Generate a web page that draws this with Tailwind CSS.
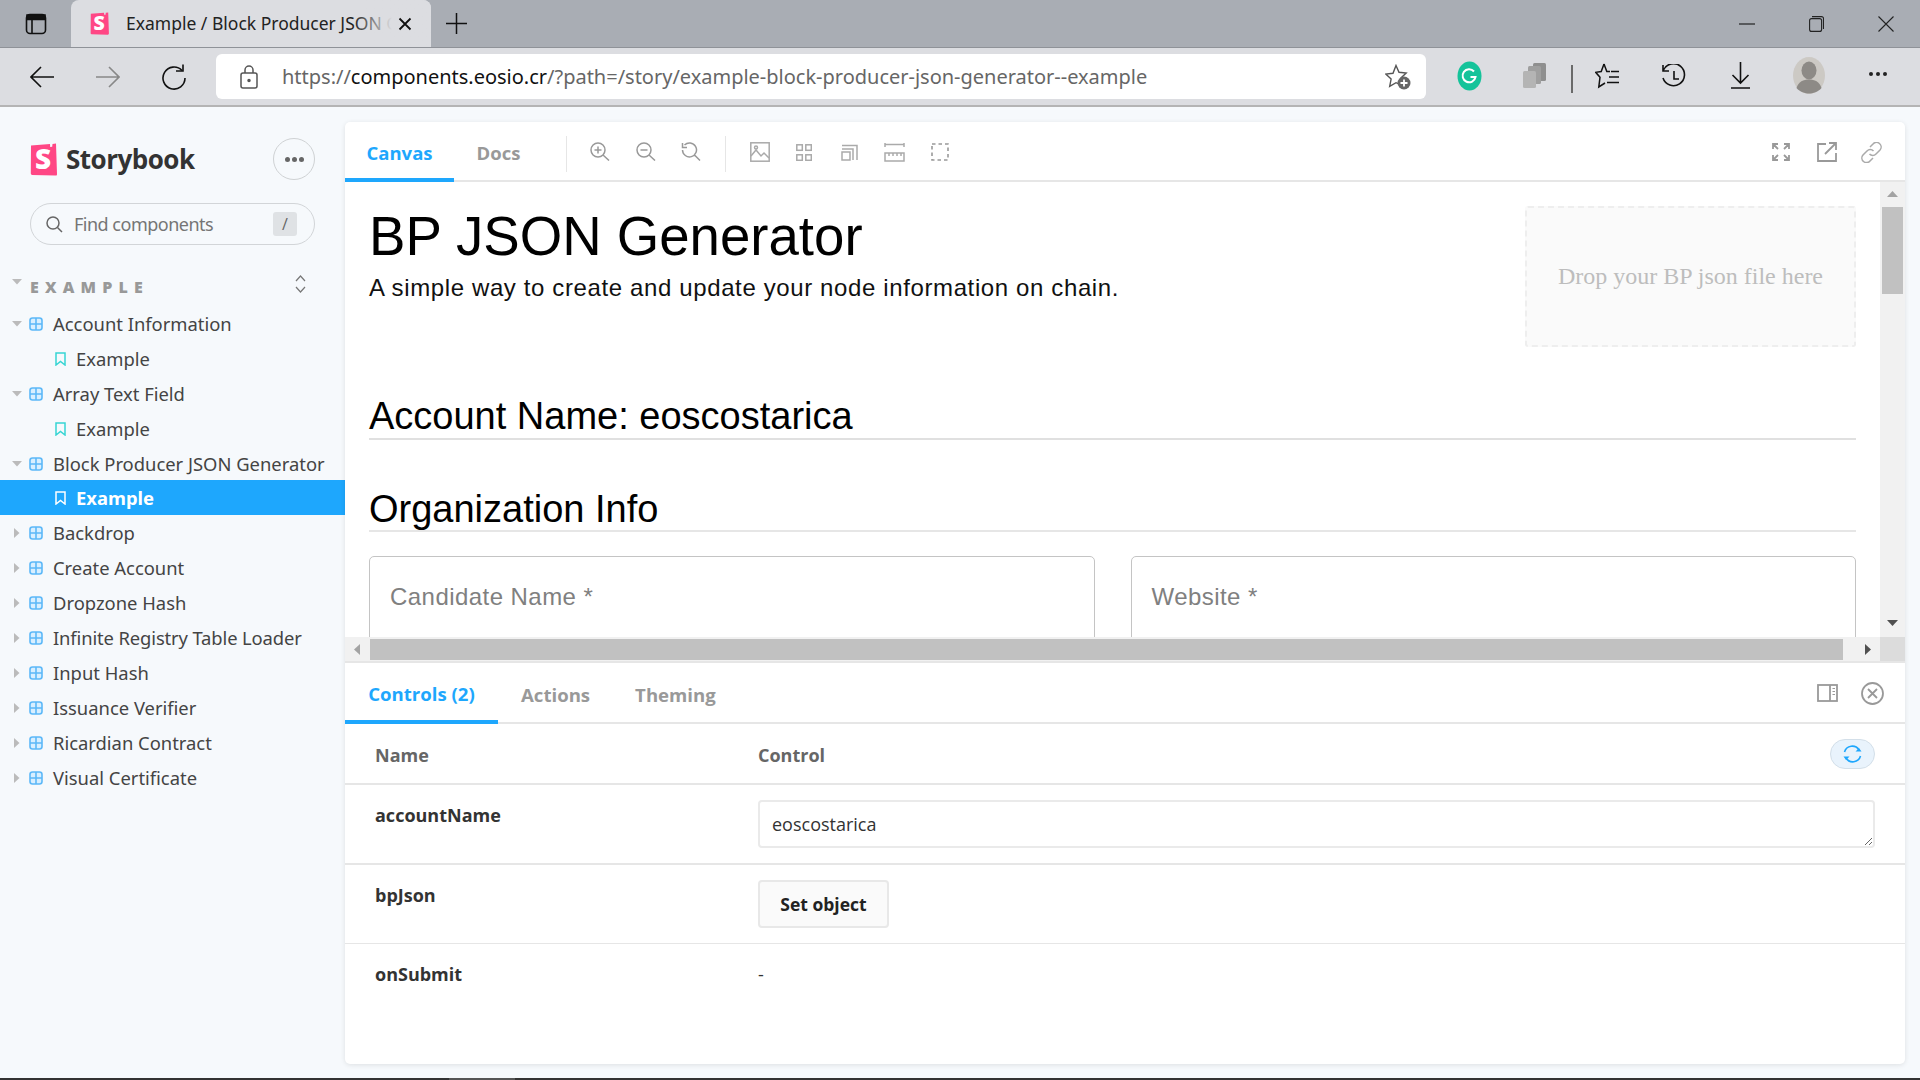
<!DOCTYPE html>
<html lang="en">
<head>
<meta charset="utf-8">
<title>Example / Block Producer JSON Generator</title>
<script src="https://cdn.jsdelivr.net/npm/@tailwindcss/browser@4"></script>
</head>
<body class="m-0">
<svg class="hidden" xmlns="http://www.w3.org/2000/svg">
  <symbol id="grid" viewBox="0 0 14 14"><rect x="1" y="1" width="12" height="12" rx="2.5" fill="#d9efff" stroke="#5cb8f8" stroke-width="1.6"/><path d="M7 1v12M1 7h12" stroke="#5cb8f8" stroke-width="1.6"/></symbol>
  <symbol id="mark" viewBox="0 0 11 14"><path d="M1 1h9v12L5.500 9.500 1 13z" fill="none" stroke="currentColor" stroke-width="1.500"/></symbol>
  <symbol id="down" viewBox="0 0 10 6"><path d="M0 0h10L5 5.500z" fill="#bbb"/></symbol>
  <symbol id="right" viewBox="0 0 6 10"><path d="M0 0v10l5.500-5z" fill="#bbb"/></symbol>
  <symbol id="sblogo" viewBox="0 0 27 33"><path d="M1 2.500 20 1l.2 3 2-.2L22.500 1 26 .6 27 31a1.500 1.500 0 0 1-1.500 1.600L2.200 32A1.500 1.500 0 0 1 .8 30.500z" fill="#ff4785"/><text x="13" y="26" text-anchor="middle" font-family="Open Sans" font-weight="800" font-size="28" fill="#fff">S</text></symbol>
</svg>

<div class="w-[1920px] h-[1080px] overflow-hidden flex flex-col bg-[#f6f9fc] font-['Open_Sans',sans-serif]">

  <!-- browser tabs -->
  <div class="h-[47px] bg-[#a9adb4] flex items-end shrink-0 relative">
    <div class="w-[71px] h-[47px] flex items-center justify-center">
      <svg width="22" height="22" viewBox="0 0 22 22" fill="none" stroke="#111" stroke-width="1.6"><rect x="1.500" y="1.500" width="19" height="19" rx="3.500"/><path d="M1.500 6.500h19M7 6.500v14"/><path d="M2 2h18v4H2z" fill="#111"/></svg>
    </div>
    <div class="w-[360px] h-[47px] bg-[#dcdde1] rounded-t-[8px] flex items-center pl-[19px] relative">
      <svg width="19" height="23" class="shrink-0"><use href="#sblogo"/></svg>
      <span class="ml-[17px] text-[17.500px] text-[#222] whitespace-nowrap font-['Noto_Sans',sans-serif]">Example / Block Producer JSON G</span>
      <div class="absolute left-[282px] top-0 w-[78px] h-[47px] rounded-tr-[8px] bg-gradient-to-r from-[#dcdde1]/0 via-[#dcdde1] to-[#dcdde1]"></div>
      <svg class="absolute left-[327px] top-[17px]" width="14" height="14" viewBox="0 0 14 14" stroke="#111" stroke-width="1.800"><path d="M1.500 1.500l11 11M12.500 1.500l-11 11"/></svg>
    </div>
    <svg class="ml-[15px] mb-[13px]" width="21" height="21" viewBox="0 0 21 21" stroke="#111" stroke-width="1.500"><path d="M10.500 0v21M0 10.500h21"/></svg>
    <div class="ml-auto h-[47px] flex items-center pr-[26px] gap-[54px]">
      <svg width="16" height="2" viewBox="0 0 16 2"><path d="M0 1h16" stroke="#222" stroke-width="1.200"/></svg>
      <svg width="15" height="16" viewBox="0 0 15 16" fill="none" stroke="#222" stroke-width="1.100"><rect x=".6" y="2.600" width="12" height="12.800" rx="2"/><path d="M3 .6h9.500a2 2 0 0 1 2 2V13"/></svg>
      <svg width="16" height="16" viewBox="0 0 16 16" stroke="#222" stroke-width="1.100"><path d="M.5.500l15 15M15.500.500l-15 15"/></svg>
    </div>
  </div>

  <!-- browser toolbar -->
  <div class="h-[60px] shrink-0 bg-[#dcdde1] border-t border-t-[#8f9298] border-b-[2px] border-b-[#b4b4b4] flex items-center relative">
    <div class="w-[216px] flex items-center pl-[30px] gap-[42px] shrink-0">
      <svg width="24" height="22" viewBox="0 0 24 22" fill="none" stroke="#111" stroke-width="1.600"><path d="M24 11H1M11 1 1 11l10 10"/></svg>
      <svg width="24" height="22" viewBox="0 0 24 22" fill="none" stroke="#888" stroke-width="1.600"><path d="M0 11h23M13 1l10 10-10 10"/></svg>
      <svg width="24" height="26" viewBox="0 0 24 26" fill="none" stroke="#111" stroke-width="1.600"><path d="M20 6.500A11 11 0 1 0 23 14"/><path d="M21 .5v6.500h-7"/></svg>
    </div>
    <div class="w-[1210px] h-[45px] bg-white rounded-[6px] flex items-center pl-[24px] pr-[15px] shrink-0">
      <svg width="18" height="24" viewBox="0 0 18 24" fill="none" stroke="#555" stroke-width="1.500"><rect x="1" y="8" width="16" height="15" rx="2"/><path d="M5 8V5a4 4 0 0 1 8 0v3"/><circle cx="9" cy="15.500" r="1" fill="#555"/></svg>
      <span class="ml-[24px] text-[20px] tracking-[-0.01px] whitespace-nowrap text-[#666] font-['Noto_Sans',sans-serif]">https://<span class="text-[#111]">components.eosio.cr</span>/?path=/story/example-block-producer-json-generator--example</span>
      <svg class="ml-auto" width="26" height="26" viewBox="0 0 26 26"><path d="M11 1.500l3 6.800 7.200.8-5.300 5 1.400 7.200L11 18.700l-6.300 3.600 1.400-7.200-5.300-5 7.200-.8z" fill="none" stroke="#555" stroke-width="1.400"/><circle cx="19" cy="19" r="6.500" fill="#666"/><path d="M19 15.500v7M15.500 19h7" stroke="#fff" stroke-width="1.800"/></svg>
    </div>
    <div class="relative flex-1 h-full">
      <svg class="absolute left-[31px] top-[13px]" width="25" height="30" viewBox="0 0 25 30"><ellipse cx="12.500" cy="15" rx="12" ry="14.500" fill="#15c39a"/><path d="M17 10.500a6.500 6.500 0 1 0 1.500 5.500h-5" fill="none" stroke="#fff" stroke-width="2"/></svg>
      <svg class="absolute left-[97px] top-[14px]" width="24" height="26" viewBox="0 0 24 26"><rect x="10" y="1" width="13" height="18" rx="1.500" fill="#8f8f8f"/><rect x="5" y="4" width="13" height="18" rx="1.500" fill="#9f9f9f"/><rect x="0" y="9" width="13" height="17" rx="1.500" fill="#b4b4b4"/></svg>
      <div class="absolute left-[145px] top-[17px] w-[2px] h-[28px] bg-[#6a6a6a]"></div>
      <svg class="absolute left-[169px] top-[14px]" width="24" height="28" viewBox="0 0 24 28" fill="none" stroke="#111" stroke-width="1.500"><path d="M9 2l2.800 7.500H15M9 2 6.200 9.500l-5.500.8 4.300 5L3.800 25 10 21"/><path d="M16 9.500h8M14 15h10M12 20.500h12"/></svg>
      <svg class="absolute left-[236px] top-[16px]" width="24" height="28" viewBox="0 0 24 28" fill="none" stroke="#111" stroke-width="1.600"><path d="M1.500 6A11 11 0 1 1 1 14M1 1v6h6"/><path d="M12 7v8h5"/></svg>
      <svg class="absolute left-[305px] top-[14px]" width="19" height="27" viewBox="0 0 19 27" fill="none" stroke="#111" stroke-width="1.600"><path d="M9.500 0v21M1.500 13l8 8 8-8M0 26h19"/></svg>
      <svg class="absolute left-[367px] top-[9px]" width="32" height="37" viewBox="0 0 32 37"><ellipse cx="16" cy="18.500" rx="16" ry="18.500" fill="#ccc9c4"/><ellipse cx="16" cy="13.500" rx="7.500" ry="9" fill="#8d8a86"/><path d="M3.500 31c2-6.500 7-8.500 12.500-8.500S26.500 24.500 28.500 31C25 35 20 36.500 16 36.500S7 35 3.500 31z" fill="#8d8a86"/></svg>
      <div class="absolute left-[443px] top-[24px] flex gap-[3px]">
        <span class="w-[4px] h-[4px] rounded-full bg-[#222]"></span><span class="w-[4px] h-[4px] rounded-full bg-[#222]"></span><span class="w-[4px] h-[4px] rounded-full bg-[#222]"></span>
      </div>
    </div>
  </div>

  <div class="flex flex-1 min-h-0">
    <!-- sidebar -->
    <aside class="w-[345px] shrink-0 text-[18.400px] text-[#444]">
      <div class="pl-[30px] pr-[30px] pt-[31px]">
        <div class="h-[42px] flex items-center">
          <svg width="27" height="33"><use href="#sblogo"/></svg>
          <span class="ml-[9px] text-[26px] font-bold tracking-[-0.5px] text-[#333] font-['Open_Sans',sans-serif]">Storybook</span>
          <div class="ml-auto w-[42px] h-[42px] rounded-full border border-[#cfd2d4] flex items-center justify-center gap-[2px]">
            <span class="w-[5px] h-[5px] rounded-full bg-[#666]"></span><span class="w-[5px] h-[5px] rounded-full bg-[#666]"></span><span class="w-[5px] h-[5px] rounded-full bg-[#666]"></span>
          </div>
        </div>
        <div class="mt-[23px] h-[42px] rounded-full border border-[#d2d5d8] flex items-center pl-[15px] pr-[17px]">
          <svg width="17" height="17" viewBox="0 0 17 17" fill="none" stroke="#666" stroke-width="1.500"><circle cx="7" cy="7" r="6"/><path d="M11.500 11.500 16 16"/></svg>
          <span class="ml-[11px] text-[#757575] text-[18px] font-['Noto_Sans',sans-serif] tracking-[-0.5px]">Find components</span>
          <span class="ml-auto w-[24px] h-[24px] rounded-[3px] bg-[#dfe2e5] text-[#666] text-[16px] flex items-center justify-center">/</span>
        </div>
      </div>
      <div class="mt-[24px] h-[35px] relative pl-[30px] flex items-center text-[#999] font-black text-[16px] tracking-[6.200px]">
        <svg class="absolute left-[12px] top-[10px]" width="10" height="6"><use href="#down"/></svg>
        EXAMPLE
        <svg class="absolute left-[295px] top-[6px]" width="11" height="18" viewBox="0 0 11 18" fill="none" stroke="#777" stroke-width="1.200"><path d="M1 6l4.500-5L10 6M1 12l4.500 5 4.500-5"/></svg>
      </div>
      <ul class="mt-[2px] font-['Noto_Sans',sans-serif]">
        <li class="h-[35px] flex items-center pl-[12px]"><svg width="10" height="6"><use href="#down"/></svg><svg class="ml-[7px]" width="14" height="14"><use href="#grid"/></svg><span class="ml-[10px]">Account Information</span></li>
        <li class="h-[35px] flex items-center pl-[55px]"><svg class="text-[#37d5d3]" width="11" height="14"><use href="#mark"/></svg><span class="ml-[10px]">Example</span></li>
        <li class="h-[35px] flex items-center pl-[12px]"><svg width="10" height="6"><use href="#down"/></svg><svg class="ml-[7px]" width="14" height="14"><use href="#grid"/></svg><span class="ml-[10px]">Array Text Field</span></li>
        <li class="h-[35px] flex items-center pl-[55px]"><svg class="text-[#37d5d3]" width="11" height="14"><use href="#mark"/></svg><span class="ml-[10px]">Example</span></li>
        <li class="h-[35px] flex items-center pl-[12px]"><svg width="10" height="6"><use href="#down"/></svg><svg class="ml-[7px]" width="14" height="14"><use href="#grid"/></svg><span class="ml-[10px] whitespace-nowrap">Block Producer JSON Generator</span></li>
        <li class="h-[35px] -mt-px flex items-center pl-[55px] bg-[#1ea7fd] text-white font-bold"><svg class="text-white" width="11" height="14"><use href="#mark"/></svg><span class="ml-[10px]">Example</span></li>
        <li class="h-[35px] flex items-center pl-[14px]"><svg width="6" height="10"><use href="#right"/></svg><svg class="ml-[9px]" width="14" height="14"><use href="#grid"/></svg><span class="ml-[10px]">Backdrop</span></li>
        <li class="h-[35px] flex items-center pl-[14px]"><svg width="6" height="10"><use href="#right"/></svg><svg class="ml-[9px]" width="14" height="14"><use href="#grid"/></svg><span class="ml-[10px]">Create Account</span></li>
        <li class="h-[35px] flex items-center pl-[14px]"><svg width="6" height="10"><use href="#right"/></svg><svg class="ml-[9px]" width="14" height="14"><use href="#grid"/></svg><span class="ml-[10px]">Dropzone Hash</span></li>
        <li class="h-[35px] flex items-center pl-[14px]"><svg width="6" height="10"><use href="#right"/></svg><svg class="ml-[9px]" width="14" height="14"><use href="#grid"/></svg><span class="ml-[10px] tracking-[-0.12px]">Infinite Registry Table Loader</span></li>
        <li class="h-[35px] flex items-center pl-[14px]"><svg width="6" height="10"><use href="#right"/></svg><svg class="ml-[9px]" width="14" height="14"><use href="#grid"/></svg><span class="ml-[10px]">Input Hash</span></li>
        <li class="h-[35px] flex items-center pl-[14px]"><svg width="6" height="10"><use href="#right"/></svg><svg class="ml-[9px]" width="14" height="14"><use href="#grid"/></svg><span class="ml-[10px]">Issuance Verifier</span></li>
        <li class="h-[35px] flex items-center pl-[14px]"><svg width="6" height="10"><use href="#right"/></svg><svg class="ml-[9px]" width="14" height="14"><use href="#grid"/></svg><span class="ml-[10px]">Ricardian Contract</span></li>
        <li class="h-[35px] flex items-center pl-[14px]"><svg width="6" height="10"><use href="#right"/></svg><svg class="ml-[9px]" width="14" height="14"><use href="#grid"/></svg><span class="ml-[10px]">Visual Certificate</span></li>
      </ul>
    </aside>

    <!-- preview + addons -->
    <main class="w-[1560px] mt-[15px] mb-[14px] bg-white rounded-[5px] shadow-[0_1px_5px_0_rgba(0,0,0,0.1)] flex flex-col overflow-hidden">
      <div class="h-[60px] shrink-0 border-b-[2px] border-[#e6e6e6] flex items-stretch text-[18.500px] font-bold">
        <div class="w-[109px] flex items-center justify-center border-b-[4px] border-[#1ea7fd] -mb-[2px] pt-[6px] text-[#1ea7fd]">Canvas</div>
        <div class="w-[89px] flex items-center justify-center pt-[3px] text-[#999]">Docs</div>
        <div class="relative flex-1 ml-[21px]">
          <div class="absolute left-[2px] top-[14px] h-[36px] w-px bg-[#e6e6e6]"></div>
          <svg class="absolute left-[26px] top-[20px]" width="20" height="19" viewBox="0 0 20 19" fill="none" stroke="#999" stroke-width="1.500"><circle cx="8" cy="8" r="7"/><path d="M13 13l6 5.500M8 4.500v7M4.500 8h7"/></svg>
          <svg class="absolute left-[72px] top-[20px]" width="20" height="19" viewBox="0 0 20 19" fill="none" stroke="#999" stroke-width="1.500"><circle cx="8" cy="8" r="7"/><path d="M13 13l6 5.500M4.500 8h7"/></svg>
          <svg class="absolute left-[117px] top-[20px]" width="20" height="19" viewBox="0 0 20 19" fill="none" stroke="#999" stroke-width="1.500"><path d="M3.500 3A7 7 0 1 1 1.500 8M1.500 1v4.500H6M13.500 13l5.500 5.500"/></svg>
          <div class="absolute left-[161px] top-[14px] h-[36px] w-px bg-[#e6e6e6]"></div>
          <svg class="absolute left-[186px] top-[20px]" width="20" height="20" viewBox="0 0 20 20" fill="none" stroke="#aaa" stroke-width="1.500"><rect x=".8" y=".8" width="18.400" height="18.400"/><path d="M1 14l5-6 5 6 3-3 5 5"/><circle cx="6" cy="5.500" r="1.500"/></svg>
          <svg class="absolute left-[232px] top-[22px]" width="16" height="17" viewBox="0 0 16 17" fill="none" stroke="#aaa" stroke-width="1.500"><rect x=".8" y=".8" width="5.500" height="5.500"/><rect x="9.800" y=".8" width="5.500" height="5.500"/><rect x=".8" y="10.800" width="5.500" height="5.500"/><rect x="9.800" y="10.800" width="5.500" height="5.500"/></svg>
          <svg class="absolute left-[277px] top-[22px]" width="17" height="17" viewBox="0 0 17 17" fill="none" stroke="#aaa" stroke-width="1.500"><rect x="1" y="8" width="8" height="8"/><path d="M1 5h11v11M1 1.500h15V16"/></svg>
          <svg class="absolute left-[320px] top-[21px]" width="21" height="19" viewBox="0 0 21 19" fill="none" stroke="#aaa" stroke-width="1.500"><path d="M1 1.500h19M1 0v4M20 0v4M1 10h19v8H1zM5 10v3M9 10v3M13 10v3M17 10v3"/></svg>
          <svg class="absolute left-[367px] top-[21px]" width="18" height="18" viewBox="0 0 18 18" fill="none" stroke="#999" stroke-width="1.600" stroke-dasharray="3.500 3"><rect x="1" y="1" width="16" height="16"/></svg>
          <svg class="absolute left-[1207px] top-[20px]" width="20" height="20" viewBox="0 0 20 20" fill="none" stroke="#999" stroke-width="1.800"><path d="M7 2H2v5M13 2h5v5M7 18H2v-5M13 18h5v-5M2 2l5 5M18 2l-5 5M2 18l5-5M18 18l-5-5"/></svg>
          <svg class="absolute left-[1253px] top-[20px]" width="20" height="20" viewBox="0 0 20 20" fill="none" stroke="#999" stroke-width="1.800"><path d="M9 2H1v17h18v-8M8 12 19 1M12 1h7v7"/></svg>
          <svg class="absolute left-[1297px] top-[20px]" width="21" height="21" viewBox="0 0 21 21" fill="none" stroke="#aaa" stroke-width="1.500"><path d="M9 5l3-3a4.500 4.500 0 0 1 7 6l-4 4a4.500 4.500 0 0 1-6.500 0"/><path d="M12 16l-3 3a4.500 4.500 0 0 1-7-6l4-4a4.500 4.500 0 0 1 6.500 0"/></svg>
        </div>
      </div>

      <!-- canvas with scrollbars -->
      <div class="h-[455px] shrink-0 flex">
        <div class="flex-1 min-w-0 overflow-hidden pl-[24px] pr-[24px] pt-[24px] font-['Liberation_Sans',sans-serif] text-black">
          <div class="flex justify-between">
            <div>
              <h1 class="text-[54.600px] leading-[60px] mt-[1px]">BP JSON Generator</h1>
              <p class="mt-[6px] text-[24px] leading-[30px] tracking-[0.62px] text-[#111]">A simple way to create and update your node information on chain.</p>
            </div>
            <div class="w-[331px] h-[141px] bg-[#fafafa] border-[2px] border-dashed border-[#eee] rounded-[3px] flex items-center justify-center font-['Liberation_Serif',serif] text-[24px] text-[#bdbdbd] pb-[2px]">Drop your BP json file here</div>
          </div>
          <h2 class="mt-[49px] text-[38px] leading-[40px] pb-[2px] border-b-[2px] border-[#e0e0e0]">Account Name: eoscostarica</h2>
          <h2 class="mt-[49px] text-[38px] leading-[40px] pb-[1px] border-b-[2px] border-[#e6e6e6]">Organization Info</h2>
          <div class="mt-[24px] grid grid-cols-2 gap-[36px]">
            <div class="h-[110px] rounded-[5px] border border-[#c4c4c4] pl-[20px] pt-[22px] text-[24px] tracking-[0.45px] text-[#808080]">Candidate Name *</div>
            <div class="h-[110px] rounded-[5px] border border-[#c4c4c4] pl-[20px] pt-[22px] text-[24px] tracking-[0.45px] text-[#808080]">Website *</div>
          </div>
        </div>
        <div class="w-[25px] shrink-0 bg-[#f1f1f1] relative pl-[2px] pr-[2px]">
          <svg class="absolute left-[7px] top-[9px]" width="11" height="6" viewBox="0 0 11 6"><path d="M5.500 0 11 6H0z" fill="#a3a3a3"/></svg>
          <div class="mt-[25px] h-[87px] bg-[#c1c1c1]"></div>
          <svg class="absolute left-[7px] top-[438px]" width="11" height="6" viewBox="0 0 11 6"><path d="M0 0h11L5.500 6z" fill="#505050"/></svg>
        </div>
      </div>
      <div class="h-[24px] shrink-0 bg-[#f1f1f1] flex">
        <div class="w-[25px] relative"><svg class="absolute left-[9px] top-[7px]" width="6" height="11" viewBox="0 0 6 11"><path d="M6 0v11L0 5.500z" fill="#a3a3a3"/></svg></div>
        <div class="w-[1473px] mt-[2px] h-[21px] bg-[#c1c1c1]"></div>
        <div class="flex-1 relative"><svg class="absolute left-[22px] top-[7px]" width="6" height="11" viewBox="0 0 6 11"><path d="M0 0v11l6-5.500z" fill="#505050"/></svg></div>
        <div class="w-[25px] bg-[#dcdcdc]"></div>
      </div>
      <div class="h-[2px] shrink-0 bg-[#e6e6e6]"></div>

      <!-- addon tabs -->
      <div class="h-[61px] shrink-0 border-b-[2px] border-[#e6e6e6] flex items-stretch text-[18.600px] font-bold relative">
        <div class="w-[153px] flex items-center justify-center border-b-[4px] border-[#1ea7fd] -mb-[2px] pt-[5px] text-[#1ea7fd]">Controls (2)</div>
        <div class="ml-[23px] flex items-center pt-[5px] text-[#999]">Actions</div>
        <div class="ml-[45px] flex items-center pt-[5px] text-[#999]">Theming</div>
        <svg class="absolute left-[1472px] top-[21px]" width="21" height="18" viewBox="0 0 21 18" fill="none" stroke="#999" stroke-width="1.800"><rect x="1" y="1" width="19" height="16"/><path d="M13 1v16"/><path d="M15.500 4.500h2.500M15.500 7.500h2.500M15.500 10.500h2.500" stroke-width="1.200"/></svg>
        <svg class="absolute left-[1516px] top-[19px]" width="23" height="23" viewBox="0 0 23 23" fill="none" stroke="#999" stroke-width="1.800"><circle cx="11.500" cy="11.500" r="10.500"/><path d="M7 7l9 9M16 7l-9 9"/></svg>
      </div>

      <!-- controls table -->
      <div class="text-[18px] text-[#333]">
        <div class="h-[61px] border-b-[2px] border-[#e6e6e6] flex items-center relative font-bold text-[#666]">
          <div class="w-[413px] pl-[30px] pt-[3px]">Name</div>
          <div class="pt-[3px]">Control</div>
          <button class="absolute left-[1485px] top-[15px] w-[45px] h-[30px] rounded-full bg-[#e9f3fc] border border-[#d3dfe9] flex items-center justify-center">
            <svg width="21" height="20" viewBox="0 0 21 20" fill="none" stroke="#1ea7fd" stroke-width="1.600"><path d="M2.500 8A8 8 0 0 1 17 6M18.500 12A8 8 0 0 1 4 14"/><path d="M13.500 7.500h6l-2.500-3.500zM7.500 12.500h-6L4 16z" fill="#1ea7fd" stroke="none"/></svg>
          </button>
        </div>
        <div class="h-[80px] border-b-[2px] border-[#e6e6e6] flex">
          <div class="w-[413px] pl-[30px] pt-[18px] font-bold leading-[24px]">accountName</div>
          <textarea class="mt-[15px] w-[1117px] h-[48px] rounded-[4px] border-[2px] border-[#eaeaea] px-[12px] pt-[9px] text-[18px] leading-[26px] text-[#333] resize font-['Open_Sans',sans-serif] outline-none">eoscostarica</textarea>
        </div>
        <div class="h-[79px] border-b border-[#e6e6e6] flex">
          <div class="w-[413px] pl-[30px] pt-[18px] font-bold leading-[24px]">bpJson</div>
          <button class="mt-[15px] w-[131px] h-[48px] rounded-[4px] bg-[#fafafa] border-[2px] border-[#e8e8e8] font-bold text-[17.500px] text-[#222]">Set object</button>
        </div>
        <div class="h-[78px] flex">
          <div class="w-[413px] pl-[30px] pt-[18px] font-bold leading-[24px]">onSubmit</div>
          <div class="pt-[18px] leading-[24px]">-</div>
        </div>
      </div>
    </main>
  </div>

  <div class="h-[2px] shrink-0 bg-[#333] flex"><div class="ml-[449px] w-[66px] bg-[#555]"></div></div>
</div>
</body>
</html>
